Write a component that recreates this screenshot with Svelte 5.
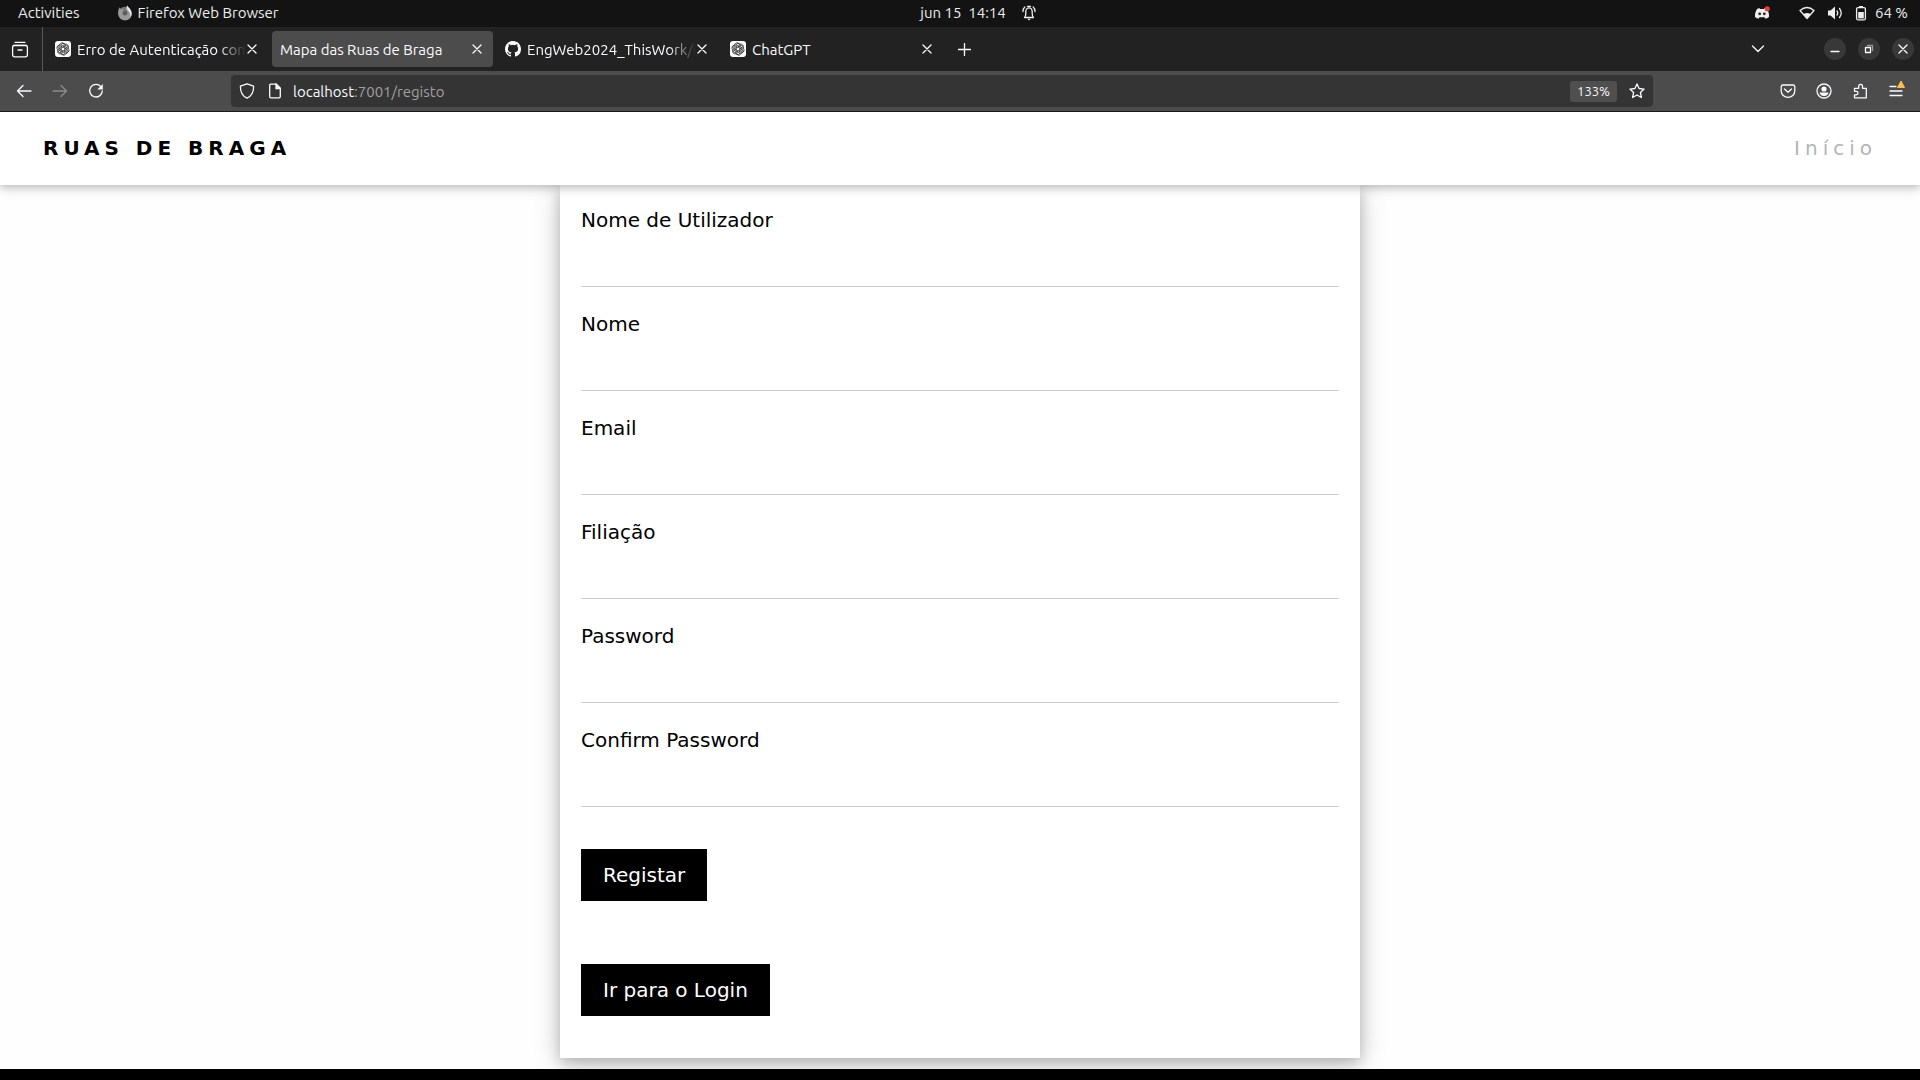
<script>
  const tabs = [
    { title: 'Erro de Autenticação com', icon: 'gpt', active: false, fade: true },
    { title: 'Mapa das Ruas de Braga', icon: '', active: true, fade: false },
    { title: 'EngWeb2024_ThisWork/i', icon: 'github', active: false, fade: true },
    { title: 'ChatGPT', icon: 'gpt', active: false, fade: false },
  ];
  const fields = [
    { id: 'username', label: 'Nome de Utilizador', type: 'text' },
    { id: 'name', label: 'Nome', type: 'text' },
    { id: 'email', label: 'Email', type: 'email' },
    { id: 'affiliation', label: 'Filiação', type: 'text' },
    { id: 'password', label: 'Password', type: 'password' },
    { id: 'confirm', label: 'Confirm Password', type: 'password' },
  ];
</script>

{#snippet cross()}
  <svg class="line" width="10" height="10" viewBox="0 0 10 10"><path d="M1 1l8 8M9 1L1 9" /></svg>
{/snippet}

<div class="screen">
  <div class="system">
    <div class="sys-left">
      <button>Activities</button>
      <button class="app">
        <svg width="16" height="16" viewBox="0 0 16 16">
          <circle cx="8" cy="8.500" r="6.800" fill="#777" />
          <path d="M1.200 8C1 5 2 3 3 2.200c0 1 .5 1.600 1.200 2L7 4.500 5.800 6.300l1 1.200c-1 0-1.500.7-1.300 1.500.5 1.600 3 2 4.500.5C11 8 10.500 6 9 5c-.5-2 .3-3.500 1.500-4.500.2 1.500 1.500 2 2.500 3.500 2 3 2.300 6 .3 8.700-2.500 3.200-7.300 3.300-10 .8C1.900 12 1.300 10 1.200 8z" fill="#999" />
          <path d="M10.500.5c.2 1.500 1.500 2 2.500 3.500 2 3 2.300 6 .3 8.700C14 9 12.500 7 11 5.500 10 4.300 9.500 2 10.500.5z" fill="#e9e9e9" />
          <circle cx="8" cy="8" r="2.300" fill="#5d5d5d" />
        </svg>
        Firefox Web Browser
      </button>
    </div>
    <button>jun 15&nbsp; 14:14</button>
    <div class="sys-right">
      <svg class="line bell" width="14" height="16" viewBox="0 0 14 16">
        <path d="M2.500 12.500c1-1 1.300-2 1.300-4V6.500a3.200 3.700 0 0 1 6.400 0v2c0 2 .3 3 1.300 4zM1 6.500C1 4.500 1.600 3 2.800 2M13 6.500c0-2-.6-3.500-1.800-4.500M5.500 1.300h3" />
        <path d="M5.300 13.800h3.400L7 15.500z" fill="currentColor" stroke="none" />
      </svg>
      <svg class="discord" width="17" height="14" viewBox="0 0 17 14">
        <path d="M5.500 2L3 3C1.500 5.500.8 8 1 11c1 .9 2.200 1.500 3.500 1.700l1-1.400h5l1 1.400c1.300-.2 2.500-.8 3.500-1.700.2-3-.5-5.500-2-8L10.500 2l-.5.900H6z" fill="#eee" />
        <circle cx="5.700" cy="7.800" r="1.400" fill="#222" /><circle cx="10.300" cy="7.800" r="1.400" fill="#222" />
        <circle cx="13.200" cy="2.800" r="2.600" fill="#e8403c" />
      </svg>
      <svg class="line" width="16" height="14" viewBox="0 0 16 14">
        <path d="M1 4.500Q8-1.500 15 4.500L8 12.500z" />
        <path d="M4.500 8Q8 6 11.500 8L8 12.800z" fill="currentColor" stroke="none" />
      </svg>
      <svg class="line" width="16" height="14" viewBox="0 0 16 14">
        <path d="M1 4.500h2.500L8 .5v13L3.500 9.500H1z" fill="currentColor" stroke="none" />
        <path d="M10 5q1.500 2 0 4M12.500 2.500q3.500 4.500 0 9" />
      </svg>
      <svg width="12" height="16" viewBox="0 0 12 16">
        <path d="M4 1h4v1.500H4z" fill="#eee" /><rect x="1.600" y="2.600" width="8.800" height="12.300" rx="1.500" fill="none" stroke="#eee" stroke-width="1.300" />
        <path d="M3.200 7h5.600v6.400H3.200z" fill="#eee" />
      </svg>
      <span>64 %</span>
    </div>
  </div>

  <div class="tabbar">
    <button class="recent" aria-label="Recent browsing">
      <svg class="line" width="18" height="17" viewBox="0 0 18 17"><path d="M4 1.300h10M2.300 4.300h13.400M7 9h4" /><rect x="1.600" y="4.500" width="14.800" height="11.300" rx="2" /></svg>
    </button>
    <div class="tabs">
      {#each tabs as tab}
        <div class="tab" class:active={tab.active}>
          {#if tab.icon === 'gpt'}
            <svg width="16" height="16" viewBox="0 0 16 16">
              <rect width="16" height="16" rx="3" fill="#fff" />
              <g fill="none" stroke="#222" stroke-width=".8">
                {#each [0, 60, 120, 180, 240, 300] as angle}
                  <path transform="rotate({angle} 8 8)" d="M6.200 9V4.600A2.300 2.300 0 0 1 10.300 3.200M6.200 5.500l3.800-2.200a2.300 2.300 0 0 1 3.200 2.500" />
                {/each}
              </g>
            </svg>
          {:else if tab.icon === 'github'}
            <svg width="16" height="16" viewBox="0 0 16 16"><path fill="#fff" d="M8 0C3.580 0 0 3.580 0 8c0 3.540 2.290 6.530 5.470 7.590.4.070.55-.17.55-.38 0-.19-.01-.82-.01-1.490-2.010.37-2.530-.49-2.690-.94-.09-.23-.48-.94-.82-1.130-.28-.15-.68-.52-.01-.53.63-.01 1.080.58 1.230.82.72 1.210 1.870.87 2.330.66.070-.52.28-.87.51-1.070-1.780-.2-3.640-.89-3.640-3.950 0-.87.31-1.590.82-2.150-.08-.2-.36-1.020.08-2.120 0 0 .67-.21 2.200.82a7.600 7.600 0 0 1 4 0c1.530-1.040 2.200-.82 2.200-.82.44 1.100.16 1.920.08 2.120.51.56.82 1.270.82 2.150 0 3.070-1.870 3.750-3.650 3.950.29.25.54.73.54 1.480 0 1.070-.01 1.930-.01 2.200 0 .21.15.46.55.38A8 8 0 0 0 16 8c0-4.420-3.580-8-8-8z" /></svg>
          {/if}
          <span class="title" class:fade={tab.fade}>{tab.title}</span>
          <button class="close" aria-label="Close tab">{@render cross()}</button>
        </div>
      {/each}
    </div>
    <button class="new" aria-label="New tab">
      <svg class="line" width="13" height="13" viewBox="0 0 13 13"><path d="M6.500 .5v12M.5 6.500h12" /></svg>
    </button>
    <button class="all" aria-label="List all tabs">
      <svg class="line" width="14" height="14" viewBox="0 0 14 14"><path d="M1.500 4L7 9.500 12.500 4" /></svg>
    </button>
    <div class="window">
      <button aria-label="Minimise"><svg class="line" width="10" height="10" viewBox="0 0 10 10"><path d="M1 7.500h8" /></svg></button>
      <button aria-label="Restore"><svg class="line" width="10" height="10" viewBox="0 0 10 10"><path d="M1.500 3.500h5v5h-5z" /><path d="M3.500 1.500h5v5" opacity=".5" /></svg></button>
      <button aria-label="Close">{@render cross()}</button>
    </div>
  </div>

  <div class="toolbar">
    <div class="history">
      <button aria-label="Back"><svg class="line" width="16" height="16" viewBox="0 0 16 16"><path d="M15 8H1.500M7 2.500L1.500 8 7 13.500" /></svg></button>
      <button aria-label="Forward" disabled><svg class="line" width="16" height="16" viewBox="0 0 16 16"><path d="M1 8h13.500M9 2.500L14.500 8 9 13.500" /></svg></button>
      <button aria-label="Reload"><svg class="line" width="16" height="16" viewBox="0 0 16 16"><path d="M12.800 3.600A6.300 6.300 0 1 0 14.300 8" /><path d="M14.800 1v5.500H9.300z" fill="currentColor" stroke="none" /></svg></button>
    </div>
    <div class="url">
      <svg class="line" width="16" height="16" viewBox="0 0 16 16"><path d="M8 .8l6.600 2.300c.2 5-1.600 9.700-6.600 12.100C3 12.800 1.200 8.100 1.400 3.100z" /></svg>
      <svg class="line" width="16" height="16" viewBox="0 0 16 16"><path d="M3.500 1.200h5.800l4 4v8.300q0 1.300-1.300 1.300H4q-1.300 0-1.300-1.300V2.500q0-1.300 1.300-1.300z" /><path d="M9 1v4.700h4.500z" fill="currentColor" /></svg>
      <span class="address">localhost<span>:7001/registo</span></span>
      <button class="zoom">133%</button>
      <button aria-label="Bookmark this page"><svg class="line" width="16" height="16" viewBox="0 0 16 16"><path d="M8 .9l2.100 4.600 5 .6-3.700 3.400 1 5L8 12l-4.400 2.500 1-5L.9 6.100l5-.6z" /></svg></button>
    </div>
    <div class="tools">
      <button aria-label="Save to Pocket"><svg class="line" width="16" height="16" viewBox="0 0 16 16"><path d="M3 2h10q1.800 0 1.800 1.800V8a6.800 6.300 0 0 1-13.600 0V3.800Q1.200 2 3 2zM4.500 6L8 9.300 11.500 6" /></svg></button>
      <button aria-label="Account"><svg class="line" width="16" height="16" viewBox="0 0 16 16"><circle cx="8" cy="8" r="7" /><circle cx="8" cy="6" r="2.600" fill="currentColor" stroke="none" /><path d="M3.500 9.500h9Q11.500 13 8 13T3.500 9.500z" fill="currentColor" stroke="none" /></svg></button>
      <button aria-label="Extensions"><svg class="line" width="16" height="16" viewBox="0 0 16 16"><path d="M2.500 14.800h11.800V5.300H10.500V3.200a1.900 1.900 0 0 0-3.800 0v2.100H2.500v3h1.700a1.800 1.800 0 0 1 0 3.600H2.500z" /></svg></button>
      <button aria-label="Menu" class="menu"><svg class="line" width="16" height="16" viewBox="0 0 16 16"><path d="M2 3.500h6M2 8h12M2 12.500h12" /></svg><svg class="alert" width="10" height="9" viewBox="0 0 10 9"><path d="M5 1l3.500 6.500h-7z" fill="#ffbd4f" stroke="#ffbd4f" stroke-linejoin="round" /></svg></button>
    </div>
  </div>

  <main class="page">
    <nav>
      <a class="brand" href="#top">RUAS DE BRAGA</a>
      <a class="home" href="#home">Início</a>
    </nav>
    <form class="card" onsubmit={(event) => event.preventDefault()}>
      {#each fields as field}
        <div class="field">
          <label for={field.id}>{field.label}</label>
          <input id={field.id} type={field.type} autocomplete="off" />
        </div>
      {/each}
      <button class="action" type="submit">Registar</button>
      <a class="action" href="#login">Ir para o Login</a>
    </form>
  </main>
  <footer></footer>
</div>

<style>
  :global(body) { background: #fff; }
  * { box-sizing: border-box; }
  button { border: 0; padding: 0; background: none; color: inherit; font: inherit; display: flex; align-items: center; justify-content: center; }
  svg { display: block; flex: none; }
  .line { fill: none; stroke: currentColor; stroke-width: 1.3; stroke-linecap: round; stroke-linejoin: round; }
  .screen { min-height: 100vh; display: flex; flex-direction: column; color: #fbfbfe; font: 15px/20px Ubuntu, "Noto Sans", sans-serif; }

  .system { display: grid; grid-template-columns: 1fr auto 1fr; align-items: center; height: 27px; padding: 0 12px 1px 18px; background: #131313; color: #eee; }
  .sys-left, .sys-right { display: flex; align-items: center; }
  .sys-left { gap: 37px; }
  .app { gap: 5px; }
  .sys-right { gap: 12px; }
  .bell { margin-left: 16px; margin-right: auto; }
  .discord { margin-right: 16px; }
  .sys-right span { margin-left: -4px; }

  .tabbar { display: flex; align-items: center; height: 44px; background: #222; }
  .recent { width: 43px; height: 44px; padding-right: 2px; border-right: 1px solid #5a5a5a; }
  .tabs { display: flex; gap: 4px; padding-left: 4px; }
  .tab { display: flex; align-items: center; gap: 6px; width: 221px; height: 36px; padding: 0 8px; border-radius: 4px; }
  .active { background: #4c4c4c; }
  .title { flex: 1; min-width: 0; padding-top: 2px; overflow: hidden; white-space: nowrap; }
  .fade { mask-image: linear-gradient(to left, transparent, #000 28px); }
  .close { width: 16px; height: 20px; margin-left: -8px; }
  .new { width: 42px; height: 36px; }
  .all { width: 36px; height: 36px; margin-left: auto; }
  .window { display: flex; gap: 12px; margin-left: 48px; margin-right: 6px; }
  .window button { width: 22px; height: 22px; border-radius: 50%; background: #383838; }

  .toolbar { display: flex; align-items: center; height: 41px; background: #4c4c4c; border-bottom: 1px solid #1a1a1a; }
  .history { display: flex; flex: 0 0 231px; gap: 20px; padding-left: 16px; }
  .history button:disabled { color: #8b8b8b; }
  .url { display: flex; align-items: center; gap: 12px; flex: 1; height: 32px; padding: 0 8px; border-radius: 4px; background: #343434; }
  .address { flex: 1; margin-left: -2px; padding-top: 2px; }
  .address span { color: #a0a0a0; }
  .zoom { height: 21px; padding: 0 7px; border-radius: 3px; background: #4f4f4f; font-size: 13px; }
  .tools { display: flex; flex: 0 0 267px; justify-content: flex-end; gap: 20px; padding-right: 16px; }
  .menu { position: relative; }
  .alert { position: absolute; top: -3px; right: -2px; }

  .page { flex: 1; background: #fefefe; color: #000; font: 20px/30px "DejaVu Sans", sans-serif; overflow: hidden; }
  nav { position: relative; z-index: 1; display: flex; align-items: center; justify-content: space-between; height: 73px; padding: 0 43px 2px; background: #fff; box-shadow: 0 3px 7px rgba(0, 0, 0, .16), 0 3px 13px rgba(0, 0, 0, .12); letter-spacing: 5px; }
  a { color: inherit; text-decoration: none; }
  .brand { font-weight: 700; }
  .home { color: #b4b4b4; }
  .card { display: flex; flex-direction: column; align-items: flex-start; max-width: 800px; margin: 0 auto 11px; padding: 20px 21px 42px; background: #fff; box-shadow: 0 5px 13px rgba(0, 0, 0, .2), 0 5px 27px rgba(0, 0, 0, .19); }
  .field { display: flex; flex-direction: column; width: 100%; margin-bottom: 22px; }
  input { height: 52px; padding: 10px; border: 0; border-bottom: 1px solid #ccc; background: none; font: inherit; outline: none; }
  .action { display: flex; align-items: center; height: 52px; padding: 0 22px; background: #000; color: #fff; }
  button.action { margin: 20px 0 63px; }
  footer { height: 11px; background: #000; }
</style>
